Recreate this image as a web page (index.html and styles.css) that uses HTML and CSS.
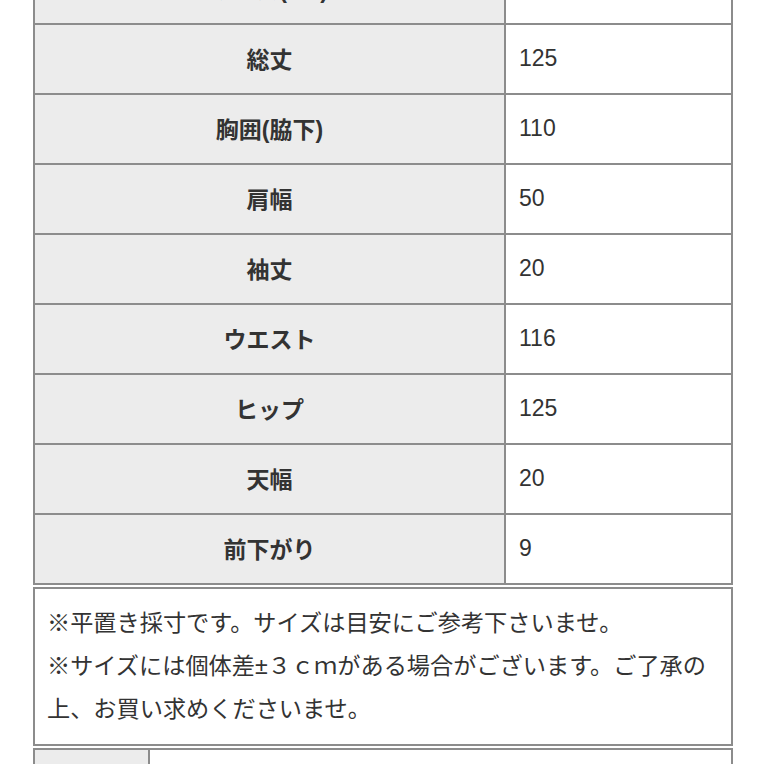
FILE: index.html
```html
<!DOCTYPE html>
<html lang="ja">
<head>
<meta charset="utf-8">
<title>サイズ表</title>
<link rel="stylesheet" href="styles.css">
</head>
<body>
<div class="wrap">
  <table class="spec">
    <tr><td class="label">サイズ(cm)</td><td class="value"></td></tr>
    <tr><td class="label">総丈</td><td class="value">125</td></tr>
    <tr><td class="label">胸囲(脇下)</td><td class="value">110</td></tr>
    <tr><td class="label">肩幅</td><td class="value">50</td></tr>
    <tr><td class="label">袖丈</td><td class="value">20</td></tr>
    <tr><td class="label">ウエスト</td><td class="value">116</td></tr>
    <tr><td class="label">ヒップ</td><td class="value">125</td></tr>
    <tr><td class="label">天幅</td><td class="value">20</td></tr>
    <tr><td class="label">前下がり</td><td class="value">9</td></tr>
  </table>
  <div class="notes">
    <p>※平置き採寸です。サイズは目安にご参考下さいませ。</p>
    <p>※サイズには個体差±３ｃｍがある場合がございます。ご了承の上、お買い求めくださいませ。</p>
  </div>
  <table class="spec next">
    <tr><td class="label small"></td><td class="value"></td></tr>
  </table>
</div>
</body>
</html>
```
FILE: styles.css
```css
html, body {
  margin: 0;
  padding: 0;
  background: #ffffff;
}
body {
  font-family: "Liberation Sans", "Noto Sans CJK JP", sans-serif;
  color: #333333;
  overflow: hidden;
}
.wrap {
  width: 700px;
  margin: -47px 0 0 33px;
}
.spec {
  width: 700px;
  border: 1px solid #8c8c8c;
  border-collapse: separate;
  border-spacing: 0;
  table-layout: fixed;
}
.spec td {
  border: 1px solid #8c8c8c;
  height: 70px;
  padding: 0 0 2px 0;
  box-sizing: border-box;
  font-size: 23px;
  vertical-align: middle;
}
.spec td.label {
  width: 471px;
  background: #ececec;
  text-align: center;
  font-weight: 700;
  color: #333333;
}
.spec td.value {
  padding-left: 13px;
  background: #ffffff;
}
.notes {
  margin-top: 2px;
  border: 2px solid #8c8c8c;
  padding: 13px 10px 13px 12px;
  font-size: 23.2px;
  line-height: 43px;
}
.notes p {
  margin: 0;
}
.next {
  margin-top: 2px;
}
.spec td.small {
  width: 115px;
}
```
